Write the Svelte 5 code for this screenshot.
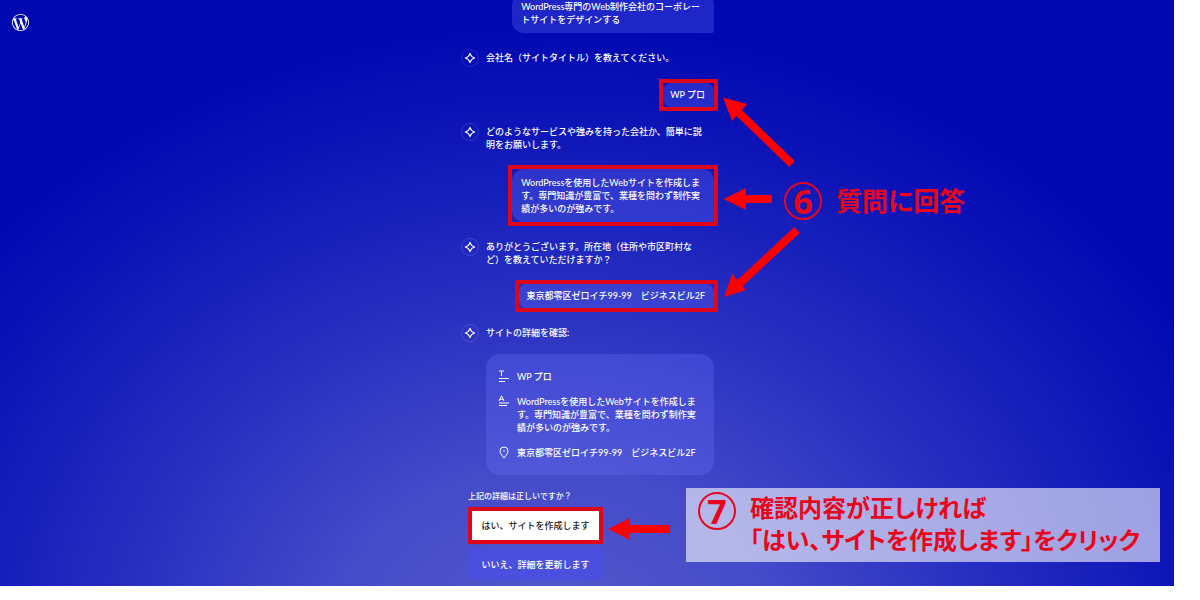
<script lang="ts">
	type Message = { from: 'bot' | 'user'; text: string; marked?: boolean };

	const about =
		'WordPressを使用したWebサイトを作成しま\nす。専門知識が豊富で、業種を問わず制作実\n績が多いのが強みです。';
	const address = '東京都零区ゼロイチ99-99　ビジネスビル2F';

	const messages: Message[] = [
		{ from: 'user', text: 'WordPress専門のWeb制作会社のコーポレー\nトサイトをデザインする' },
		{ from: 'bot', text: '会社名（サイトタイトル）を教えてください。' },
		{ from: 'user', text: 'WP プロ', marked: true },
		{ from: 'bot', text: 'どのようなサービスや強みを持った会社か、簡単に説\n明をお願いします。' },
		{ from: 'user', text: about, marked: true },
		{ from: 'bot', text: 'ありがとうございます。所在地（住所や市区町村な\nど）を教えていただけますか？' },
		{ from: 'user', text: address, marked: true }
	];

	const details = [
		{ icon: 'title', text: 'WP プロ' },
		{ icon: 'tagline', text: about },
		{ icon: 'pin', text: address }
	];
</script>

{#snippet spark()}
	<span class="avatar">
		<svg viewBox="0 0 18 18" aria-hidden="true">
			<path d="M9 4.600 10.600 7.400 13.400 9 10.600 10.600 9 13.400 7.400 10.600 4.600 9 7.400 7.400Z" />
		</svg>
	</span>
{/snippet}

<div class="page">
	<main class="screen">
		<a class="logo" href="#home" aria-label="WordPress">
			<svg viewBox="0 0 24 24" aria-hidden="true">
				<path
					d="M21.469 6.825c.84 1.537 1.318 3.3 1.318 5.175 0 3.979-2.156 7.456-5.363 9.325l3.295-9.527c.615-1.54.82-2.771.82-3.864 0-.405-.026-.78-.07-1.11m-7.981.105c.647-.03 1.232-.105 1.232-.105.582-.075.514-.93-.067-.899 0 0-1.755.135-2.88.135-1.064 0-2.85-.15-2.85-.15-.585-.03-.661.855-.075.885 0 0 .54.061 1.125.09l1.68 4.605-2.37 7.08L5.354 6.9c.649-.03 1.234-.1 1.234-.1.585-.075.516-.93-.065-.896 0 0-1.746.138-2.874.138-.2 0-.438-.008-.69-.015C4.911 3.15 8.235 1.215 12 1.215c2.809 0 5.365 1.072 7.286 2.833-.046-.003-.091-.009-.141-.009-1.06 0-1.812.923-1.812 1.914 0 .89.513 1.643 1.06 2.531.411.72.89 1.643.89 2.977 0 .915-.354 1.994-.821 3.479l-1.075 3.585-3.9-11.61.001.014zM12 22.784c-1.059 0-2.081-.153-3.048-.437l3.237-9.406 3.315 9.087c.024.053.05.101.078.149-1.12.393-2.325.609-3.582.609M1.211 12c0-1.564.336-3.05.935-4.39L7.29 21.709C3.694 19.96 1.212 16.271 1.211 12M12 0C5.385 0 0 5.385 0 12s5.385 12 12 12 12-5.385 12-12S18.615 0 12 0"
				/>
			</svg>
		</a>

		<div class="chat">
			<div class="log">
				{#each messages as message}
					{#if message.from === 'bot'}
						<div class="question">
							{@render spark()}
							<p>{message.text}</p>
						</div>
					{:else}
						<div class="answer" class:marked={message.marked}>
							<p class:long={message.text.includes('\n')}>{message.text}</p>
						</div>
					{/if}
				{/each}
				<div class="question">
					{@render spark()}
					<p>サイトの詳細を確認:</p>
				</div>
			</div>

			<ul class="card">
				{#each details as detail}
					<li>
						<svg viewBox="0 0 12 13" aria-hidden="true">
							{#if detail.icon === 'title'}
								<path d="M1 1h5M3.500 1v5M1 8.500h10M1 11.500h6" />
							{:else if detail.icon === 'tagline'}
								<path d="M1 6 3.500 .8 6 6M2 4.300h3M1 8h10M1 10.500h8" />
							{:else}
								<path d="M6 12C3.500 9 2 7 2 5a4 4 0 0 1 8 0c0 2-1.500 4-4 7ZM6 4v2" />
							{/if}
						</svg>
						<p>{detail.text}</p>
					</li>
				{/each}
			</ul>

			<div class="confirm">
				<p>上記の詳細は正しいですか？</p>
				<button class="yes" type="button">はい、サイトを作成します</button>
				<button class="no" type="button">いいえ、詳細を更新します</button>
			</div>

			<!-- arrows drawn over the conversation -->
			<svg class="arrows" viewBox="0 0 350 586" aria-hidden="true">
				<path class="shaft" d="M275 109 332 164M284 199h28M278 285l59-55M165 529h45" />
				<path
					class="head"
					d="M263 97.500 287 104 272 121ZM263.500 199 286 188v22ZM264 297 272 274 286 290ZM148 529 170 518v22Z"
				/>
			</svg>
			<div class="note answer-note">
				<span class="number">6</span>
				<p>質問に回答</p>
			</div>
			<div class="note click-note">
				<span class="number">7</span>
				<p>確認内容が正しければ<br />「はい、サイトを作成します」をクリック</p>
			</div>
		</div>
	</main>
</div>

<style>
	:global(body) {
		margin: 0;
		background: #fff;
	}

	.page {
		padding-right: 26px;
		font: 9px/13px Lato, 'Noto Sans CJK JP', sans-serif;
		font-weight: 500;
		color: #fff;
	}

	.screen {
		position: relative;
		overflow: hidden;
		background: radial-gradient(ellipse 64% 108% at 47% 112%, #575bcc 0%, #454bc9 30%, #2830c1 56%, #0f17b8 82%, #0008b2 100%);
	}

	p {
		margin: 0;
		white-space: pre;
	}

	.logo {
		position: absolute;
		top: 14px;
		left: 12px;
	}

	.logo svg {
		display: block;
		width: 17px;
		height: 17px;
		fill: #fff;
	}

	.chat {
		position: relative;
		display: flex;
		flex-direction: column;
		width: 254px;
		margin: 0 auto;
	}

	.log {
		display: flex;
		flex-direction: column;
		gap: 16px;
		margin-top: -7px;
	}

	.question {
		display: flex;
		gap: 7px;
		padding-left: 1px;
	}

	.question p {
		padding: 2px 0;
	}

	.avatar {
		flex: none;
		width: 16px;
		height: 16px;
		border: 1px solid rgba(255, 255, 255, 0.13);
		border-radius: 50%;
	}

	.avatar svg {
		display: block;
		margin: -1px;
		width: 18px;
		height: 18px;
		fill: none;
		stroke: #fff;
		stroke-width: 1.2;
	}

	.answer {
		align-self: flex-end;
	}

	.answer p {
		padding: 5px 9px 6px 7px;
		border-radius: 8px 8px 2px 8px;
		background: rgba(110, 120, 255, 0.28);
	}

	.answer p.long {
		padding: 7px 14px 7px 9px;
		border-radius: 12px 12px 2px 12px;
	}

	.marked {
		outline: 4px solid #e0061a;
	}

	.card {
		display: flex;
		flex-direction: column;
		gap: 12px;
		margin: 12px 0 0 26px;
		padding: 16px 12px;
		border-radius: 14px;
		background: rgba(110, 120, 255, 0.28);
		list-style: none;
	}

	.card li {
		display: flex;
		gap: 7px;
	}

	.card svg {
		flex: none;
		width: 12px;
		height: 13px;
		fill: none;
		stroke: #fff;
	}

	.confirm {
		display: flex;
		flex-direction: column;
		align-items: flex-start;
		gap: 4px;
		padding: 15px 0 6px 8px;
	}

	.confirm p {
		font-size: 8px;
	}

	button {
		width: 135px;
		height: 37px;
		padding: 0;
		border: 0;
		border-radius: 2px;
		font: inherit;
		cursor: pointer;
	}

	.yes {
		border-radius: 0;
		outline: 4px solid #e0061a;
		outline-offset: -4px;
		background: #fff;
		color: #222;
	}

	.no {
		height: 32px;
		background: #4a50dd;
		color: #fff;
	}

	.arrows {
		position: absolute;
		top: 0;
		left: 0;
		width: 350px;
		height: 586px;
		pointer-events: none;
	}

	.shaft {
		fill: none;
		stroke: #f00;
		stroke-width: 8;
	}

	.head {
		fill: #f00;
	}

	.note {
		position: absolute;
		display: flex;
		align-items: flex-start;
		gap: 14px;
		color: #e8061c;
		font-family: 'Noto Sans', 'Noto Sans CJK JP', sans-serif;
		font-size: 26px;
		font-weight: 700;
		line-height: 32px;
		font-feature-settings: 'palt';
	}

	.number {
		box-sizing: border-box;
		flex: none;
		width: 38px;
		height: 38px;
		border: 2px solid currentColor;
		border-radius: 50%;
		font-size: 34px;
		line-height: 34px;
		text-align: center;
	}

	.answer-note {
		top: 182px;
		left: 324px;
		align-items: center;
	}

	.click-note {
		top: 488px;
		left: 226px;
		box-sizing: border-box;
		width: 474px;
		padding: 4px 12px 6px;
		background: rgba(255, 255, 255, 0.6);
		font-size: 24px;
	}
</style>
